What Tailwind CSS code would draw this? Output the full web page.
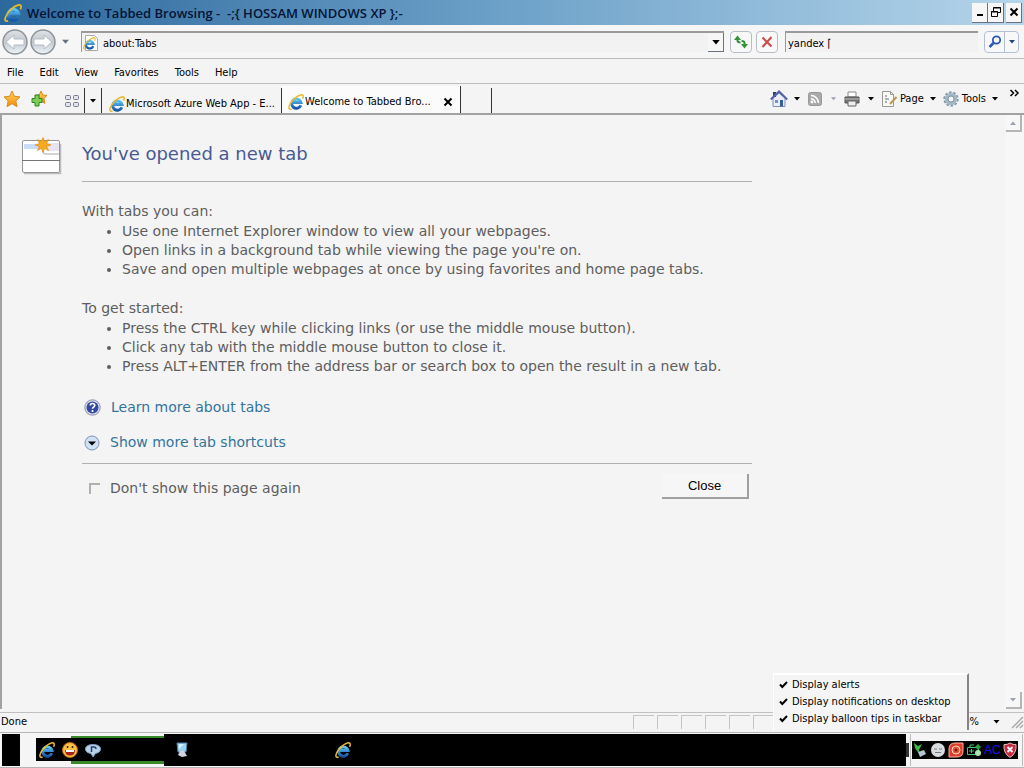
<!DOCTYPE html>
<html lang="en">
<head>
<meta charset="utf-8">
<title>Welcome to Tabbed Browsing</title>
<script src="https://cdn.jsdelivr.net/npm/@tailwindcss/browser@4"></script>
</head>
<body class="flex h-dvh flex-col overflow-hidden bg-[#f4f4f4] font-['Tahoma','DejaVu_Sans_Condensed','Noto_Sans',sans-serif] text-[11px] leading-4 text-black">
<svg class="absolute size-0" aria-hidden="true">
  <defs>
    <linearGradient id="blue" x1="0" y1="0" x2="0" y2="1"><stop offset="0" stop-color="#5cc4f5"/><stop offset="1" stop-color="#1656a8"/></linearGradient>
    <linearGradient id="orb" x1="0" y1="0" x2="0" y2="1"><stop offset="0" stop-color="#dfe2e5"/><stop offset=".5" stop-color="#c3c9cf"/><stop offset="1" stop-color="#eef5f8"/></linearGradient>
    <linearGradient id="gold" x1="0" y1="0" x2="0" y2="1"><stop offset="0" stop-color="#ffd95a"/><stop offset="1" stop-color="#f08a10"/></linearGradient>
    <symbol id="ie" viewBox="0 0 16 16">
      <path d="M12.800 11.300A4.700 4.700 0 1 1 13 8.600H4.500" fill="none" stroke="url(#blue)" stroke-width="3"/>
      <path d="M3.600 14.800C1.200 16 .2 14.400 1.500 11.300C3.300 6.900 8.500 2 12.400 1C15.200 .3 15.900 1.900 14.600 4.700" fill="none" stroke="#e9b92c" stroke-width="1.500"/>
    </symbol>
    <symbol id="caret" viewBox="0 0 6 4"><path d="M0 0h6L3 3.500z" fill="currentColor"/></symbol>
    <symbol id="check" viewBox="0 0 9 9"><path d="M1 4.500L3.300 7L8 2" fill="none" stroke="#000" stroke-width="2"/></symbol>
  </defs>
</svg>

<header class="flex h-[25px] shrink-0 items-center bg-linear-to-r from-[#2b689c] via-[#6ea2c9] to-[#b5d5ea] pl-1 pr-0.5">
  <svg class="size-[18px]"><use href="#ie"/></svg>
  <h1 class="ml-[5px] flex-1 whitespace-pre font-['Trebuchet_MS','Open_Sans',sans-serif] text-[13px] font-semibold text-[#031436]">Welcome to Tabbed Browsing -  -;{ HOSSAM WINDOWS XP };-</h1>
  <div class="flex">
    <button aria-label="Minimize" class="flex h-5 w-4 items-center justify-center border-r border-b border-gray-500 bg-[#f6f6f6]"><svg class="size-3" viewBox="0 0 12 12"><path d="M3 9h6" stroke="#000" stroke-width="2"/></svg></button>
    <button aria-label="Restore" class="flex h-5 w-4 items-center justify-center border-r border-b border-gray-500 bg-[#f6f6f6]"><svg class="size-3" viewBox="0 0 12 12" fill="none" stroke="#000"><path d="M3.500 5V1.500h7v5H8M3 2h8M1.500 5.500h6v5h-6zM1 6h7"/></svg></button>
    <button aria-label="Close window" class="ml-0.5 flex h-5 w-4 items-center justify-center border-r border-b border-gray-500 bg-[#f6f6f6]"><svg class="size-3" viewBox="0 0 12 12"><path d="M2.500 2.500l7 7M9.500 2.500l-7 7" stroke="#000" stroke-width="2"/></svg></button>
  </div>
</header>

<div class="flex h-[34px] shrink-0 items-center border-b border-[#bdbdbd] bg-[#f6f6f6] pl-px pr-[5px]">
  <div class="flex h-7">
    <button aria-label="Back" class="size-7"><svg viewBox="0 0 28 28"><circle cx="14" cy="14" r="12" fill="url(#orb)" stroke="#8d9499" stroke-width="1.500"/><path d="M5 14l8-7v4h10v6H13v4z" fill="#fff" stroke="#b3bcc5"/></svg></button>
    <button aria-label="Forward" class="size-7"><svg viewBox="0 0 28 28"><circle cx="14" cy="14" r="12" fill="url(#orb)" stroke="#8d9499" stroke-width="1.500"/><path d="M23 14l-8-7v4H5v6h10v4z" fill="#fff" stroke="#b3bcc5"/></svg></button>
  </div>
  <button aria-label="Recent pages" class="ml-[5px] mr-3 w-[7px] text-gray-500"><svg class="h-1.5 w-[7px]"><use href="#caret"/></svg></button>
  <div class="flex h-[21px] flex-1 items-center border-t-2 border-l border-[#9c9a98] bg-[#f2f2f2]">
    <svg class="ml-px size-4" viewBox="0 0 16 16"><path d="M2.500.5h9l3 3v12h-12z" fill="#fff" stroke="#aaa"/><g transform="translate(0 2) scale(.8)"><use href="#ie" width="16" height="16"/></g></svg>
    <input aria-label="Address" value="about:Tabs" class="ml-1 min-w-0 flex-1 bg-transparent pt-0.5 outline-none">
    <button aria-label="Show addresses" class="flex h-full w-4 items-center justify-center border-r border-b border-gray-500 bg-[#f6f6f6]"><svg class="h-[5px] w-[8px]"><use href="#caret"/></svg></button>
  </div>
  <button aria-label="Refresh" class="ml-1.5 flex size-[22px] items-center justify-center rounded-sm border border-[#b7bcc6] bg-[#f8f8f8]"><svg class="size-4 shrink-0" viewBox="0 0 16 16"><path d="M4.500 5v1.500q0 2 3 2" fill="none" stroke="#349136" stroke-width="2"/><path d="M1 6l3.500-4.500L8 6zM8 10h7l-3.500 4.500z" fill="#349136"/><path d="M11.500 11V9q0-2-3-2" fill="none" stroke="#349136" stroke-width="2"/></svg></button>
  <button aria-label="Stop" class="ml-1 flex size-[22px] items-center justify-center rounded-sm border border-[#b7bcc6] bg-[#f8f8f8]"><svg class="size-4" viewBox="0 0 16 16"><path d="M3.500 3.500l9 9M12.500 3L3.500 13" stroke="#ce4a49" stroke-width="2"/></svg></button>
  <input aria-label="Search" value="yandex ⌈" class="ml-[7px] h-[21px] w-[193px] border-t-2 border-l border-[#9c9a98] bg-[#f2f2f2] pt-0.5 pl-0.5 outline-none">
  <div class="ml-1.5 flex h-[22px] rounded-sm border border-[#b3bfd4] bg-[#f8f8f8]">
    <button aria-label="Run search" class="flex w-5 items-center justify-center border-r border-[#b3bfd4]"><svg class="size-4" viewBox="0 0 16 16" fill="none" stroke="#2959b8"><circle cx="9.500" cy="6" r="3.700" stroke-width="1.800"/><path d="M6.500 9L2.500 13" stroke-width="2.500"/></svg></button>
    <button aria-label="Search options" class="flex w-[13px] items-center justify-center text-[#24497c]"><svg class="h-1 w-[6px]"><use href="#caret"/></svg></button>
  </div>
</div>

<nav class="flex h-[25px] shrink-0 items-center gap-4 border-b border-[#bdbdbd] px-[7px] pt-[3px]">
  <button>File</button><button>Edit</button><button>View</button><button>Favorites</button><button>Tools</button><button>Help</button>
</nav>

<div class="flex h-[29px] shrink-0 items-stretch pl-[3px]">
  <button aria-label="Favorites center" class="mr-[9px] flex items-center"><svg class="size-[18px]" viewBox="0 0 18 18"><path d="M9 1l2.400 5.300 5.600.6-4.200 3.900 1.200 5.900L9 13.700l-5 3 1.200-5.900L1 6.900l5.600-.6z" fill="url(#gold)" stroke="#d98a1b"/></svg></button>
  <button aria-label="Add to favorites" class="mr-4 flex items-center"><svg class="size-[18px]" viewBox="0 0 18 18"><path d="M11 1l1.700 4 4.300.4-3.100 3 1 5L11 11l-4 2.500 1-5L5 5.400 9.300 5z" fill="url(#gold)" stroke="#d98a1b"/><path d="M5 5h4v3.500h3v4H9V16H5v-3.500H2v-4h3z" fill="#79cf58" stroke="#2d8420"/></svg></button>
  <button aria-label="Quick tabs" class="mr-1 flex items-center pt-1"><svg class="size-4" viewBox="0 0 16 16" fill="#e2e5ef" stroke="#77798a"><rect x="1.500" y="2.500" width="5" height="4" rx="1"/><rect x="9.500" y="2.500" width="5" height="4" rx="1"/><rect x="1.500" y="9.500" width="5" height="4" rx="1"/><rect x="9.500" y="9.500" width="5" height="4" rx="1"/></svg></button>
  <button aria-label="Tab list" class="mt-1 flex w-[18px] items-center justify-center border-x border-[#333]"><svg class="h-1 w-[6px]"><use href="#caret"/></svg></button>
  <div role="tablist" class="flex min-w-0">
    <button role="tab" aria-selected="false" class="mt-1 flex w-[180px] items-center gap-px border-r border-[#333] pl-[7px] pt-1.5 whitespace-nowrap"><svg class="size-4 shrink-0"><use href="#ie"/></svg>Microsoft Azure Web App - E...</button>
    <div class="mt-0.5 flex w-[179px] items-center border-r border-[#333] bg-[#fbfbfb] pl-1.5 pt-1">
      <button role="tab" aria-selected="true" class="flex flex-1 items-center gap-px whitespace-nowrap"><svg class="size-4 shrink-0"><use href="#ie"/></svg>Welcome to Tabbed Bro...</button>
      <button aria-label="Close tab" class="mr-[7px]"><svg class="size-2.5" viewBox="0 0 10 10"><path d="M1.500 1.500l7 7M8.500 1.500l-7 7" stroke="#000" stroke-width="2"/></svg></button>
    </div>
    <button aria-label="New tab" class="mt-1 w-[31px] border-r border-[#333]"></button>
  </div>
  <div class="ml-auto flex items-center pr-1">
    <button aria-label="Home" class="mr-[6px] flex items-center"><svg class="size-[18px]" viewBox="0 0 18 18"><path d="M3 8v8.500h12V8L9 3z" fill="#e9eefa" stroke="#7f8eb5"/><path d="M3 2h3v5H3z" fill="#33357f"/><path d="M.8 9.500L9 1.500l8.200 8" fill="none" stroke="#5463a8" stroke-width="2"/><path d="M10 10h3v6.500h-3z" fill="#355f97"/><path d="M5 10h3v3H5z" fill="#7b92c0"/></svg></button>
    <button aria-label="Home options" class="mr-2"><svg class="h-1 w-[6px]"><use href="#caret"/></svg></button>
    <button aria-label="Feeds" class="mr-[9px]"><svg class="size-[14px]" viewBox="0 0 14 14" fill="none" stroke="#fff" stroke-width="1.500"><rect x=".5" y=".5" width="13" height="13" rx="2" fill="#aaa" stroke="#999" stroke-width="1"/><path d="M3 3.500A7.500 7.500 0 0 1 10.500 11M3 6.700A4.300 4.300 0 0 1 7.300 11"/><circle cx="4" cy="10" r=".7"/></svg></button>
    <button aria-label="Feed options" class="mr-2 text-gray-400"><svg class="h-1 w-[5px]"><use href="#caret"/></svg></button>
    <button aria-label="Print" class="mr-2"><svg class="size-4" viewBox="0 0 16 16"><path d="M4 1h8v5H4z" fill="#fff" stroke="#888"/><path d="M1 6h14v6H1z" fill="#777" stroke="#555"/><path d="M1 8h14" stroke="#bbb"/><path d="M4 10h8v5H4z" fill="#eee" stroke="#666"/></svg></button>
    <button aria-label="Print options" class="mr-[7px]"><svg class="h-1 w-[6px]"><use href="#caret"/></svg></button>
    <button class="mr-[6px] flex items-center gap-[3px]"><svg class="size-4" viewBox="0 0 16 16"><path d="M1.500.5h8l3 3v12h-11z" fill="#fbfaf2" stroke="#999"/><path d="M9.500.5v3h3" fill="none" stroke="#999"/><path d="M4 5h2M4 8h4M4 11h2" stroke="#8c9aab" stroke-width="1.500"/><path d="M15.500 6L9 13" stroke="#b79a5b" stroke-width="2"/></svg>Page</button>
    <button aria-label="Page options" class="mr-[7px]"><svg class="h-1 w-[6px]"><use href="#caret"/></svg></button>
    <button class="mr-[6px] flex items-center gap-[3px]"><svg class="size-4" viewBox="0 0 16 16"><circle cx="8" cy="8" r="6.700" fill="none" stroke="#8298a8" stroke-width="2" stroke-dasharray="2.500 1.700"/><circle cx="8" cy="8" r="4.500" fill="none" stroke="#a3b8c7" stroke-width="3.500"/><circle cx="8" cy="8" r="3" fill="#f4f8fa" stroke="#7d95a5"/></svg>Tools</button>
    <button aria-label="Tools options" class="mr-[11px]"><svg class="h-1 w-[6px]"><use href="#caret"/></svg></button>
    <button aria-label="More commands" class="mb-3"><svg class="h-2 w-[11px]" viewBox="0 0 11 8" fill="none" stroke="#000" stroke-width="1.500"><path d="M1.500 1l3 3-3 3M6 1l3 3-3 3"/></svg></button>
  </div>
</div>

<div class="flex min-h-0 flex-1 border-t-2 border-l-2 border-[#a2a2a2]">
  <main class="flex flex-1 items-start pl-5 pt-[22px]">
    <svg class="h-10 w-10 shrink-0" viewBox="0 0 40 40"><path d="M2 36.500h36.500V7" fill="none" stroke="#bbb" stroke-width="1.500"/><rect x=".5" y="3.500" width="37" height="32" rx="1.500" fill="#fff" stroke="#969696"/><path d="M2 7h17v5H2z" fill="#cbdcf8"/><path d="M25 6h12v8H25z" fill="#e9e5f0"/><path d="M21 12v3q0 2 2 2h14" fill="none" stroke="#aaa"/><path d="M0 23.500h38" stroke="#777"/><path d="M21 .5l1.600 4 4-2-2 4 4.400 1.500-4.400 1.500 2 4-4-2-1.600 4-1.600-4-4 2 2-4L13 8l4.400-1.500-2-4 4 2z" fill="#f8a920" stroke="#dc8710" stroke-width=".6"/></svg>
    <section class="ml-5 w-[670px] font-['Verdana','DejaVu_Sans',sans-serif] text-[14px] leading-[19px] text-[#5e5e5e]">
      <h2 class="border-b border-[#b0b0b0] pb-[15px] pt-[5px] text-[18px] leading-6 text-[#495a93]">You've opened a new tab</h2>
      <p class="mt-5">With tabs you can:</p>
      <ul class="list-disc pl-10 pt-px">
        <li>Use one Internet Explorer window to view all your webpages.</li>
        <li>Open links in a background tab while viewing the page you're on.</li>
        <li>Save and open multiple webpages at once by using favorites and home page tabs.</li>
      </ul>
      <p class="mt-5">To get started:</p>
      <ul class="list-disc pl-10 pt-px">
        <li>Press the CTRL key while clicking links (or use the middle mouse button).</li>
        <li>Click any tab with the middle mouse button to close it.</li>
        <li>Press ALT+ENTER from the address bar or search box to open the result in a new tab.</li>
      </ul>
      <a href="#learn" class="mt-[22px] flex items-center gap-2.5 pl-0.5 text-[#33749c]"><svg class="size-[17px]" viewBox="0 0 17 17"><circle cx="8.500" cy="8.500" r="7.700" fill="#dfe0ec" stroke="#888cab"/><circle cx="8.500" cy="8.500" r="6" fill="#3448a0"/><path d="M6.300 6.600q0-2.100 2.200-2.100t2.200 1.900q0 1-1.100 1.700t-1.100 1.600M8.500 11v2" fill="none" stroke="#fff" stroke-width="1.700"/></svg>Learn more about tabs</a>
      <a href="#shortcuts" class="mt-4 flex items-center gap-2.5 pl-0.5 text-[#33749c]"><svg class="size-4" viewBox="0 0 16 16"><circle cx="8" cy="8" r="7" fill="#d3e1f5" stroke="#7b94b8"/><path d="M4 6.500h8L8 10.500z" fill="#000"/></svg>Show more tab shortcuts</a>
      <div class="mt-[11px] flex items-start justify-between border-t border-[#b0b0b0] pt-2.5 pr-[3px]">
        <label class="flex items-center gap-2.5 pl-[7px] pt-[5px]"><input type="checkbox" class="size-[11px] appearance-none border-t-2 border-l-2 border-[#b0b0b0]">Don't show this page again</label>
        <button class="h-[25px] w-[87px] border-r-2 border-b-2 border-[#a0a0a0] bg-[#f6f6f6] font-['Liberation_Sans',sans-serif] text-[13px] text-black">Close</button>
      </div>
    </section>
  </main>
  <div class="flex w-[18px] flex-col justify-between bg-[#f7f7f7]">
    <button aria-label="Scroll up" class="flex h-[17px] w-4 items-center justify-center border-r-2 border-b-2 border-[#b5b5b5] text-gray-400"><svg class="h-1 w-2 rotate-180"><use href="#caret"/></svg></button>
    <button aria-label="Scroll down" class="flex h-[17px] w-4 items-center justify-center border-r-2 border-b-2 border-[#b5b5b5] text-gray-400"><svg class="h-1 w-2"><use href="#caret"/></svg></button>
  </div>
</div>

<footer class="mt-[3px] flex h-5 shrink-0 items-center border-t border-[#c0c0c0] pb-px pl-px">
  <span class="flex-1">Done</span>
  <div class="flex h-[14px] gap-[3px]">
    <i class="w-[21px] border-t border-l border-[#c4c4c4]"></i><i class="w-[21px] border-t border-l border-[#c4c4c4]"></i><i class="w-[21px] border-t border-l border-[#c4c4c4]"></i><i class="w-[21px] border-t border-l border-[#c4c4c4]"></i><i class="w-[21px] border-t border-l border-[#c4c4c4]"></i><i class="w-[21px] border-t border-l border-[#c4c4c4]"></i>
  </div>
  <div class="flex w-[250px] items-center justify-end">
    <button class="flex items-center gap-3.5">100%<svg class="h-1 w-[7px]"><use href="#caret"/></svg></button>
    <svg class="ml-2.5 size-3.5" viewBox="0 0 14 14" stroke="#aaa" stroke-width="1.500"><path d="M2 13L13 2M6 13l7-7M10 13l3-3"/></svg>
  </div>
</footer>

<div class="flex h-9 shrink-0 items-center border-y border-[#b5b5b5] bg-[#f5f5f5] pl-0.5 pr-px">
  <div class="h-8 w-[18px] bg-black"></div>
  <div class="ml-4 flex h-8 flex-1 items-center">
    <div class="flex h-8 w-32 flex-col">
      <div class="flex h-1 items-end"><span class="w-[35px]"></span><span class="h-0.5 flex-1 bg-[#368b28]"></span></div>
      <div class="flex flex-1 items-center gap-[7px] bg-black pl-[3px]">
        <button aria-label="Internet Explorer"><svg class="size-4"><use href="#ie"/></svg></button>
        <button aria-label="Messenger"><svg class="size-4" viewBox="0 0 16 16"><circle cx="8" cy="8" r="7.500" fill="#f9c044" stroke="#bf6615"/><path d="M3 8h10q0 5.500-5 5.500T3 8z" fill="#a72015"/><path d="M4 8h8v2H4z" fill="#fff"/><path d="M5.500 4v2M10.500 4v2" stroke="#422" stroke-width="1.500"/></svg></button>
        <button aria-label="Chat"><svg class="size-4" viewBox="0 0 16 16"><path d="M8 2.500c4 0 7.500 1.500 7.500 4.500s-3 4-5 4.500L8 15l-2-3.500C3 11 .5 10 .5 7s3.500-4.500 7.500-4.500z" fill="#b9d1e7" stroke="#7e9bc0"/><path d="M6.500 10V5h2.500q2 0 2 2" fill="none" stroke="#25406a" stroke-width="1.500"/></svg></button>
      </div>
      <div class="flex h-[5px] items-start"><span class="w-[35px]"></span><span class="h-[3px] flex-1 bg-[#368b28]"></span></div>
    </div>
    <div class="flex h-8 flex-1 items-center bg-black pl-2.5">
      <button aria-label="Computer"><svg class="size-4" viewBox="0 0 16 16"><path d="M3 1h10l-1 9H4z" fill="#9dd3f2" stroke="#557e9f"/><path d="M5 2h5L5 7z" fill="#d8f1fe"/><path d="M6 9h4l3 5-5 1-4-2z" fill="#d2d4e1"/></svg></button>
      <button aria-label="Tabbed Browsing window" class="ml-[145px]"><svg class="size-4"><use href="#ie"/></svg></button>
    </div>
  </div>
  <div class="mr-px h-3.5 w-[3px] bg-[#333]"></div>
  <div class="flex h-8 items-center border-x border-[#bbb] pr-1 pl-px">
    <div class="flex h-[18px] items-center gap-0.5 bg-black">
      <svg class="size-4" viewBox="0 0 16 16"><path d="M2 1l4 3 4-2-3 6-4-2z" fill="#43b742"/><path d="M4 6l3 4" stroke="#43b742" stroke-width="2"/><path d="M6 10l6-2 2 4-6 3z" fill="#b7c4d4"/></svg>
      <svg class="size-4" viewBox="0 0 16 16"><circle cx="8" cy="8" r="7" fill="#d9dcde"/><path d="M4 7h3M9 7h3M5 10.500h6" stroke="#727b80" stroke-width="1.200"/></svg>
      <svg class="size-4" viewBox="0 0 16 16"><path d="M1 15V7q0-6 6-6h8v8q0 6-6 6z" fill="#df3d2b" stroke="#ffb7a6"/><circle cx="8" cy="8" r="4" fill="#e5502e" stroke="#ffe0d5"/><circle cx="8" cy="8" r="1.500" fill="#8c1b0f"/></svg>
      <svg class="size-4" viewBox="0 0 16 16"><path d="M1.500 5.500h11v7h-11zM3 9h5M5.500 7v4M4 5V3h4" fill="none" stroke="#4dc661"/><path d="M9 5l3-3 3 3-3 3z" fill="#2f9f45"/><circle cx="12" cy="11" r="3" fill="#a9e6a9"/></svg>
      <span class="w-4 text-center font-['Liberation_Sans',sans-serif] text-[12px] text-[#1515e8]">AC</span>
      <svg class="size-4" viewBox="0 0 16 16"><path d="M8 1q3 2 6 1.500Q15 11 8 15.500 1 11 2 2.500 5 3 8 1z" fill="#c52a3d" stroke="#eeb6ba"/><path d="M5.500 5l5 5M10.500 5l-5 5" stroke="#fff" stroke-width="1.800"/></svg>
    </div>
  </div>
</div>

<div role="menu" class="absolute right-[55px] bottom-[38px] flex h-[57px] w-[196px] flex-col border-t-2 border-l border-t-white border-l-white border-r-2 border-r-[#858585] bg-[#f5f5f5] pt-px pl-[5px] whitespace-nowrap">
  <button role="menuitemcheckbox" aria-checked="true" class="flex h-[17px] items-center gap-1"><svg class="size-[9px]"><use href="#check"/></svg>Display alerts</button>
  <button role="menuitemcheckbox" aria-checked="true" class="flex h-[17px] items-center gap-1"><svg class="size-[9px]"><use href="#check"/></svg>Display notifications on desktop</button>
  <button role="menuitemcheckbox" aria-checked="true" class="flex h-[17px] items-center gap-1"><svg class="size-[9px]"><use href="#check"/></svg>Display balloon tips in taskbar</button>
</div>
</body>
</html>
